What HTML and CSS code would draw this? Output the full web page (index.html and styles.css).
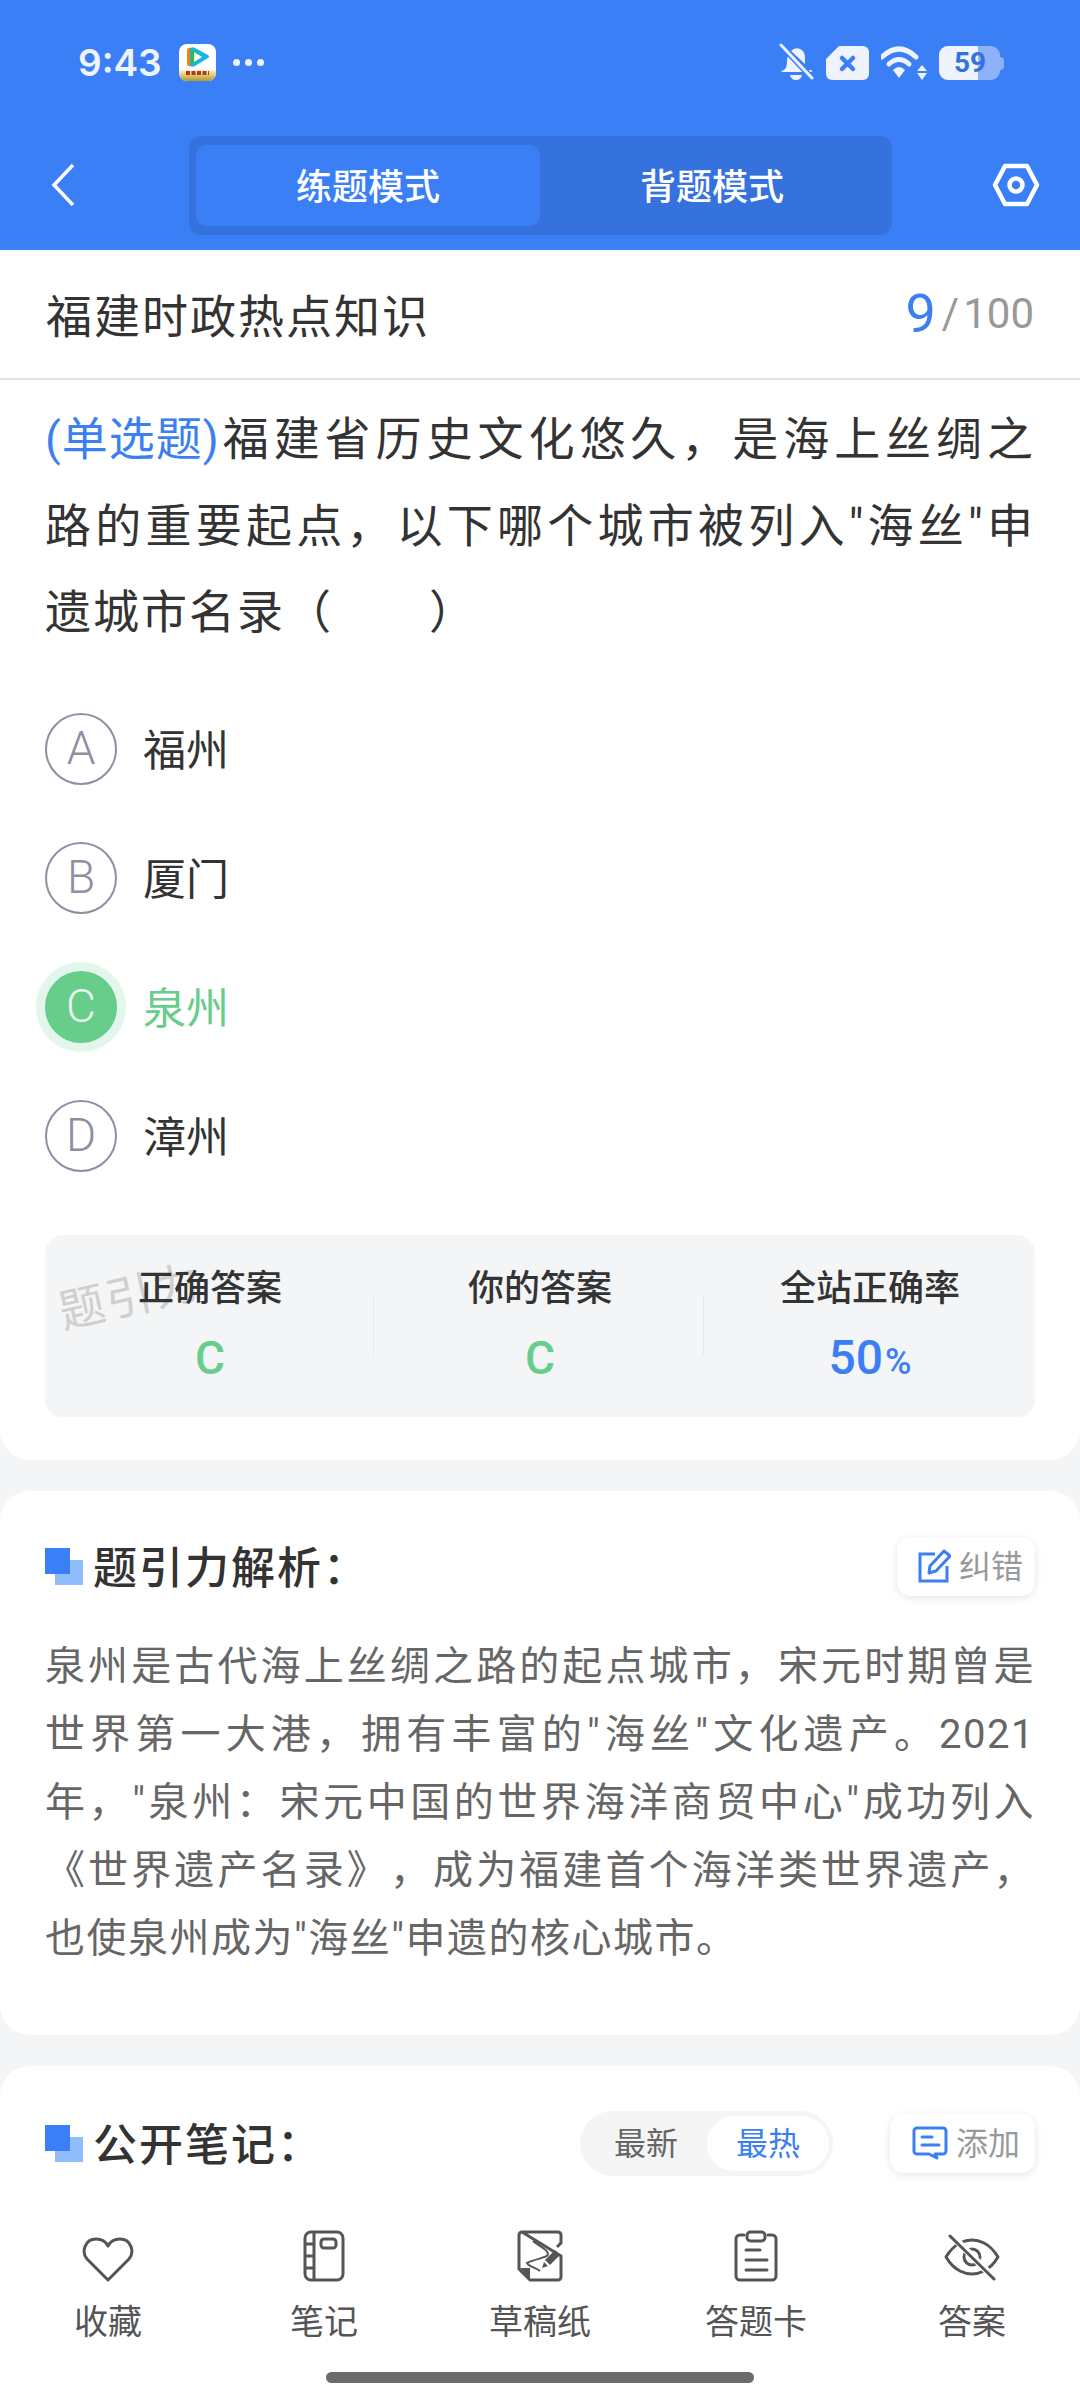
FILE: index.html
```html
<!DOCTYPE html>
<html lang="zh-CN">
<head>
    <meta charset="UTF-8">
    <meta name="viewport" content="width=device-width, initial-scale=1.0">
    <title>福建时政热点知识</title>
    <link rel="stylesheet" href="styles.css">
</head>
<body>
    <div class="screen">
        <div class="header">
            <div class="status">
                <div class="status-left">
                    <span class="clock">9:43</span>
                    <svg class="app-icon" width="37" height="37" viewBox="0 0 37 37">
                        <defs>
                            <linearGradient id="gold" x1="0" y1="0" x2="0" y2="1">
                                <stop offset="0" stop-color="#fbf6c4"/>
                                <stop offset="1" stop-color="#b8952a"/>
                            </linearGradient>
                        </defs>
                        <rect width="37" height="37" rx="8" fill="#fff"/>
                        <path d="M0 26h37v3a8 8 0 0 1-8 8H8a8 8 0 0 1-8-8z" fill="url(#gold)"/>
                        <path d="M7 29h23" stroke="#b8341e" stroke-width="4" stroke-dasharray="4 1.5"/>
                        <path d="M8 7q0-4 4-3l4 2v14l-4 2q-4 1-4-3z" fill="#f57d1e"/>
                        <path d="M11 5q1-3 5-1l13 7q2 2 0 3l-13 8q-4 2-5-1z" fill="#19b4e6"/>
                        <path d="M11 6q3 7 0 14l8-3V8z" fill="#27c23c"/>
                        <path d="M15 8l8 5-8 5z" fill="#fff"/>
                    </svg>
                    <span class="more"><i></i><i></i><i></i></span>
                </div>
                <div class="status-right">
                    <svg width="36" height="39" viewBox="0 0 36 39">
                        <path d="M6 27q3-3 3-8 0-5 2-8L27 27z M13 8q4-4 9-2 5 2 5 9v6z M30 27h3q1 0 1 2H3l2-2z M12 32h12q-1 5-6 5t-6-5z" fill="#eef3fe"/>
                        <path d="M3 2l31 33" stroke="#3b7ff7" stroke-width="6"/>
                        <path d="M3 2l31 33" stroke="#eef3fe" stroke-width="3" stroke-linecap="round"/>
                    </svg>
                    <svg width="43" height="34" viewBox="0 0 43 34">
                        <path d="M13 0h24a6 6 0 0 1 6 6v22a6 6 0 0 1-6 6H6a6 6 0 0 1-6-6V13z" fill="#eef3fe"/>
                        <path d="M16 12l11 11M27 12L16 23" stroke="#3b7ff7" stroke-width="4.5" stroke-linecap="round"/>
                    </svg>
                    <svg width="46" height="34" viewBox="0 0 46 34">
                        <path d="M1 11q17-16 34 0" fill="none" stroke="#eef3fe" stroke-width="5" stroke-linecap="round"/>
                        <path d="M8 18q10-9 20 0" fill="none" stroke="#eef3fe" stroke-width="5" stroke-linecap="round"/>
                        <path d="M12 24q6-6 12 0l-6 8z" fill="#eef3fe"/>
                        <path d="M41 19l5 6H36z M36 27h10l-5 7z" fill="#eef3fe"/>
                    </svg>
                    <div class="battery">
                        <div class="battery-fill"></div>
                        <span class="battery-num">59</span>
                        <div class="battery-cap"></div>
                    </div>
                </div>
            </div>
            <div class="nav">
                <svg class="back" width="26" height="44" viewBox="0 0 26 44">
                    <path d="M23 2L4 22l19 20" fill="none" stroke="#fff" stroke-width="3.5"/>
                </svg>
                <div class="tabs">
                    <div class="tab active">练题模式</div>
                    <div class="tab">背题模式</div>
                </div>
                <svg class="gear" width="48" height="44" viewBox="0 0 48 44">
                    <path d="M13 3h22l10 19-10 19H13L3 22z" fill="none" stroke="#fff" stroke-width="4.5" stroke-linejoin="round"/>
                    <circle cx="24" cy="22" r="6.5" fill="none" stroke="#fff" stroke-width="4.5"/>
                </svg>
            </div>
        </div>

        <div class="main">
            <div class="title-row">
                <span class="title">福建时政热点知识</span>
                <span class="count"><b>9</b><i>/</i>100</span>
            </div>

            <div class="card question-card">
                <p class="question"><span class="q-type">(单选题)</span>福建省历史文化悠久，是海上丝绸之路的重要起点，以下哪个城市被列入"海丝"申遗城市名录（　　）</p>
                <div class="options">
                    <div class="option"><span class="letter">A</span><span class="option-text">福州</span></div>
                    <div class="option"><span class="letter">B</span><span class="option-text">厦门</span></div>
                    <div class="option correct"><span class="letter">C</span><span class="option-text">泉州</span></div>
                    <div class="option"><span class="letter">D</span><span class="option-text">漳州</span></div>
                </div>
                <div class="answers">
                    <span class="watermark">题引力</span>
                    <div class="answer-col">
                        <span class="answer-label">正确答案</span>
                        <span class="answer-value green">C</span>
                    </div>
                    <div class="answer-col">
                        <span class="answer-label">你的答案</span>
                        <span class="answer-value green">C</span>
                    </div>
                    <div class="answer-col">
                        <span class="answer-label">全站正确率</span>
                        <span class="answer-value blue">50<small>%</small></span>
                    </div>
                </div>
            </div>

            <div class="card analysis-card">
                <div class="section-head">
                    <span class="mark"></span>
                    <span class="section-title">题引力解析：</span>
                    <div class="chip">
                        <svg width="33" height="34" viewBox="0 0 33 34">
                            <path d="M17 5H2v27h27V17" fill="none" stroke="#3b7ff2" stroke-width="3"/>
                            <path d="M12 17L26 2l6 5-14 15-7 2z" fill="none" stroke="#3b7ff2" stroke-width="3" stroke-linejoin="round"/>
                        </svg>
                        <span class="chip-text">纠错</span>
                    </div>
                </div>
                <p class="analysis">泉州是古代海上丝绸之路的起点城市，宋元时期曾是世界第一大港，拥有丰富的"海丝"文化遗产。2021年，"泉州：宋元中国的世界海洋商贸中心"成功列入《世界遗产名录》，成为福建首个海洋类世界遗产，也使泉州成为"海丝"申遗的核心城市。</p>
            </div>

            <div class="card notes-card">
                <div class="section-head">
                    <span class="mark"></span>
                    <span class="section-title">公开笔记：</span>
                    <div class="sort">
                        <span class="sort-item">最新</span>
                        <span class="sort-item on">最热</span>
                    </div>
                    <div class="chip add">
                        <svg width="36" height="34" viewBox="0 0 36 34">
                            <path d="M5 2h26a3 3 0 0 1 3 3v20a3 3 0 0 1-3 3h-8l2 4-8-4H5a3 3 0 0 1-3-3V5a3 3 0 0 1 3-3z" fill="none" stroke="#3b7ff2" stroke-width="3" stroke-linejoin="round"/>
                            <path d="M10 11h10M10 19h17" stroke="#3b7ff2" stroke-width="3" stroke-linecap="round"/>
                        </svg>
                        <span class="chip-text">添加</span>
                    </div>
                </div>
            </div>
        </div>

        <div class="toolbar">
            <div class="tool">
                <svg width="52" height="46" viewBox="0 0 52 46">
                    <path d="M26 44L5 23C-1 16 3 3 14 3c6 0 10 3 12 7 2-4 6-7 12-7 11 0 15 13 9 20z" fill="none" stroke="#555" stroke-width="3" stroke-linejoin="round"/>
                </svg>
                <span>收藏</span>
            </div>
            <div class="tool">
                <svg width="42" height="52" viewBox="0 0 42 52">
                    <rect x="2" y="2" width="38" height="48" rx="6" fill="none" stroke="#555" stroke-width="3"/>
                    <path d="M11 2v48M2 14h9M2 26h9M2 38h9" stroke="#555" stroke-width="3"/>
                    <rect x="18" y="9" width="15" height="9" rx="3" fill="none" stroke="#555" stroke-width="3"/>
                </svg>
                <span>笔记</span>
            </div>
            <div class="tool">
                <svg width="46" height="52" viewBox="0 0 46 52">
                    <path d="M5 2h36a3 3 0 0 1 3 3v9M44 26v21a3 3 0 0 1-3 3H13L2 39V5a3 3 0 0 1 3-3z" fill="none" stroke="#555" stroke-width="3" stroke-linejoin="round"/>
                    <path d="M3 38h10v11z" fill="#555"/>
                    <path d="M16 11c4 4 15 8 15 13 0 4-11 4-21 9 2 4 8 4 13 8" fill="none" stroke="#555" stroke-width="2"/>
                    <path d="M38 20l5 5-10 10-5-5z" fill="#555"/>
                    <path d="M27 32l4 4-6 2z" fill="#555"/>
                    <path d="M40 17l4-4" stroke="#555" stroke-width="3"/>
                </svg>
                <span>草稿纸</span>
            </div>
            <div class="tool">
                <svg width="44" height="52" viewBox="0 0 44 52">
                    <path d="M10 5H6a4 4 0 0 0-4 4v37a4 4 0 0 0 4 4h32a4 4 0 0 0 4-4V9a4 4 0 0 0-4-4h-4" fill="none" stroke="#555" stroke-width="3" stroke-linecap="round"/>
                    <rect x="13" y="2" width="18" height="9" rx="3.5" fill="none" stroke="#555" stroke-width="3"/>
                    <path d="M12 20h14M12 30h21M12 40h21" stroke="#555" stroke-width="3" stroke-linecap="round"/>
                </svg>
                <span>答题卡</span>
            </div>
            <div class="tool">
                <svg width="56" height="48" viewBox="0 0 56 48">
                    <path d="M16 9q12-6 24 0 8 4 14 14-6 10-14 14-12 6-24 0-8-4-14-14 6-10 14-14z" fill="none" stroke="#555" stroke-width="3" stroke-linejoin="round"/>
                    <circle cx="28" cy="23" r="8" fill="none" stroke="#555" stroke-width="3"/>
                    <path d="M6 0l44 44" stroke="#fff" stroke-width="7"/>
                    <path d="M6 2l44 43" stroke="#555" stroke-width="3" stroke-linecap="round"/>
                </svg>
                <span>答案</span>
            </div>
        </div>
        <div class="home-bar"><span></span></div>
    </div>
</body>
</html>
```

FILE: styles.css
```css
* { box-sizing: border-box; }
html, body { margin: 0; padding: 0; }
body { font-family: Roboto, "Noto Sans CJK SC", sans-serif; color: #333; background: #f4f5f7; text-spacing-trim: space-all; }
p { margin: 0; }

.screen { width: 1080px; height: 2400px; display: flex; flex-direction: column; overflow: hidden; }

/* blue top */
.header { background: #3b7ff7; height: 250px; flex: none; }
.status { height: 125px; padding: 0 76px 0 78px; display: flex; justify-content: space-between; align-items: center; }
.status-left { display: flex; align-items: center; }
.clock { font-family: Inter, Roboto, sans-serif; font-size: 37px; font-weight: 600; color: #eef3fe; }
.app-icon { margin-left: 17px; }
.more { display: flex; gap: 5px; margin-left: 17px; }
.more i { width: 7px; height: 7px; border-radius: 50%; background: #eef3fe; }
.status-right { display: flex; align-items: center; gap: 12px; }
.battery { position: relative; width: 61px; height: 34px; background: #8db2fa; border-radius: 9px; margin-right: 4px; }
.battery-fill { position: absolute; left: 0; top: 0; bottom: 0; width: 39px; background: #eef3fe; border-radius: 9px 0 0 9px; }
.battery-num { position: absolute; left: 15px; top: 0; line-height: 34px; font-size: 28px; font-weight: 700; color: #3572dd; }
.battery-cap { position: absolute; right: -4px; top: 11px; width: 4px; height: 13px; background: #8db2fa; border-radius: 0 4px 4px 0; }

.nav { height: 125px; display: flex; align-items: center; padding: 0 40px 5px 50px; }
.tabs { width: 703px; height: 99px; margin-left: 113px; padding: 9px 8px 9px 7px; background: #3572dd; border-radius: 12px; display: flex; }
.tab { flex: 1; display: flex; align-items: center; justify-content: center; padding-bottom: 3px; font-size: 36px; font-weight: 500; color: #fff; border-radius: 10px; }
.tab.active { background: #3b7ff7; }
.gear { margin-left: auto; }

.main { flex: 1; min-height: 0; overflow: hidden; }

.title-row { height: 130px; padding: 0 46px 2px; background: #fff; border-bottom: 2px solid #e2e2e2; display: flex; justify-content: space-between; align-items: center; }
.title { font-size: 46px; letter-spacing: 2px; color: #333; }
.count { font-size: 42px; color: #999; display: flex; align-items: center; }
.count b { font-size: 54px; font-weight: 400; color: #3b7ff2; }
.count i { font-style: normal; margin: 0 4px 0 6px; }

.card { background: #fff; border-radius: 30px; margin-bottom: 31px; }
.question-card { border-radius: 0 0 30px 30px; padding: 16px 45px 45px; height: 1080px; }
.question { font-size: 46px; line-height: 86.5px; letter-spacing: 2px; color: #333; text-align: justify; }
.q-type { display: inline-block; color: #3b7ff2; letter-spacing: 1px; }

.options { margin-top: 29px; }
.option { height: 129px; display: flex; align-items: center; font-size: 43px; color: #333; }
.option-text { margin-bottom: 4px; }
.letter { width: 72px; height: 72px; padding-bottom: 2px; border: 2px solid #8d8fa3; border-radius: 50%; margin-right: 26px; display: flex; align-items: center; justify-content: center; font-size: 46px; font-weight: 350; color: #8d8fa3; }
.option.correct { color: #67cd8b; }
.correct .letter { background: #67cd8b; border-color: #67cd8b; color: #e8f8ee; box-shadow: 0 0 0 9px #e3f6ec; }

.answers { position: relative; margin-top: 34px; height: 182px; background: #f4f5f7; border-radius: 18px; display: flex; padding-top: 31px; }
.answer-col { flex: 1; display: flex; flex-direction: column; align-items: center; gap: 16px; position: relative; }
.answer-col + .answer-col::before { content: ""; position: absolute; left: -2px; top: 30px; height: 60px; width: 1px; background: #e8e9ec; }
.answer-label { position: relative; z-index: 1; font-size: 36px; font-weight: 500; line-height: 46px; color: #333; }
.answer-value { position: relative; z-index: 1; font-size: 46px; font-weight: 500; line-height: 60px; }
.answer-value small { font-size: 36px; font-weight: 500; margin-left: 2px; }
.green { color: #67cd8b; }
.blue { color: #3b7ff2; font-size: 48px; }
.watermark { position: absolute; left: 12px; top: 25px; font-size: 46px; color: #cfcfcf; letter-spacing: 2px; transform: rotate(-13deg); }

.analysis-card { height: 544px; padding: 44px 45px 0; }
.section-head { display: flex; align-items: center; height: 62px; }
.mark { position: relative; width: 38px; height: 37px; margin-right: 10px; flex: none; }
.mark::before { content: ""; position: absolute; left: 10px; top: 12px; width: 28px; height: 25px; background: #8fbcfb; }
.mark::after { content: ""; position: absolute; left: 0; top: 0; width: 25px; height: 26px; background: #3b7ff7; }
.section-title { flex: 1; padding-bottom: 3px; font-size: 44px; font-weight: 500; letter-spacing: 2px; color: #333; }
.chip { height: 59px; padding: 0 12px 0 21px; background: #fff; border-radius: 14px; box-shadow: 0 2px 8px rgba(0, 0, 0, .1); display: flex; align-items: center; gap: 8px; font-size: 32px; color: #999; }
.chip-text { margin-bottom: 4px; }
.chip.add { width: 145px; padding-left: 22px; }
.analysis { margin-top: 36px; font-size: 40px; line-height: 68px; letter-spacing: 1.5px; color: #666; text-align: justify; }

.notes-card { height: 200px; padding: 46px 45px 0; }
.sort { display: flex; align-items: center; height: 65px; padding: 0 4px 0 5px; background: #f5f5f5; border-radius: 33px; margin-right: 57px; }
.sort-item { width: 122px; height: 55px; padding-bottom: 4px; display: flex; align-items: center; justify-content: center; font-size: 32px; color: #666; border-radius: 28px; }
.sort-item.on { color: #3b7ff2; background: #fff; }

.toolbar { height: 150px; flex: none; background: #fff; display: flex; }
.tool { flex: 1; display: flex; flex-direction: column; align-items: center; justify-content: flex-end; height: 149px; gap: 18px; font-size: 34px; color: #555; line-height: 44px; }
.tool svg { display: block; }
.home-bar { height: 55px; flex: none; background: #fff; display: flex; justify-content: center; padding-top: 27px; }
.home-bar span { width: 428px; height: 11px; border-radius: 6px; background: #6b6b6b; }
```
